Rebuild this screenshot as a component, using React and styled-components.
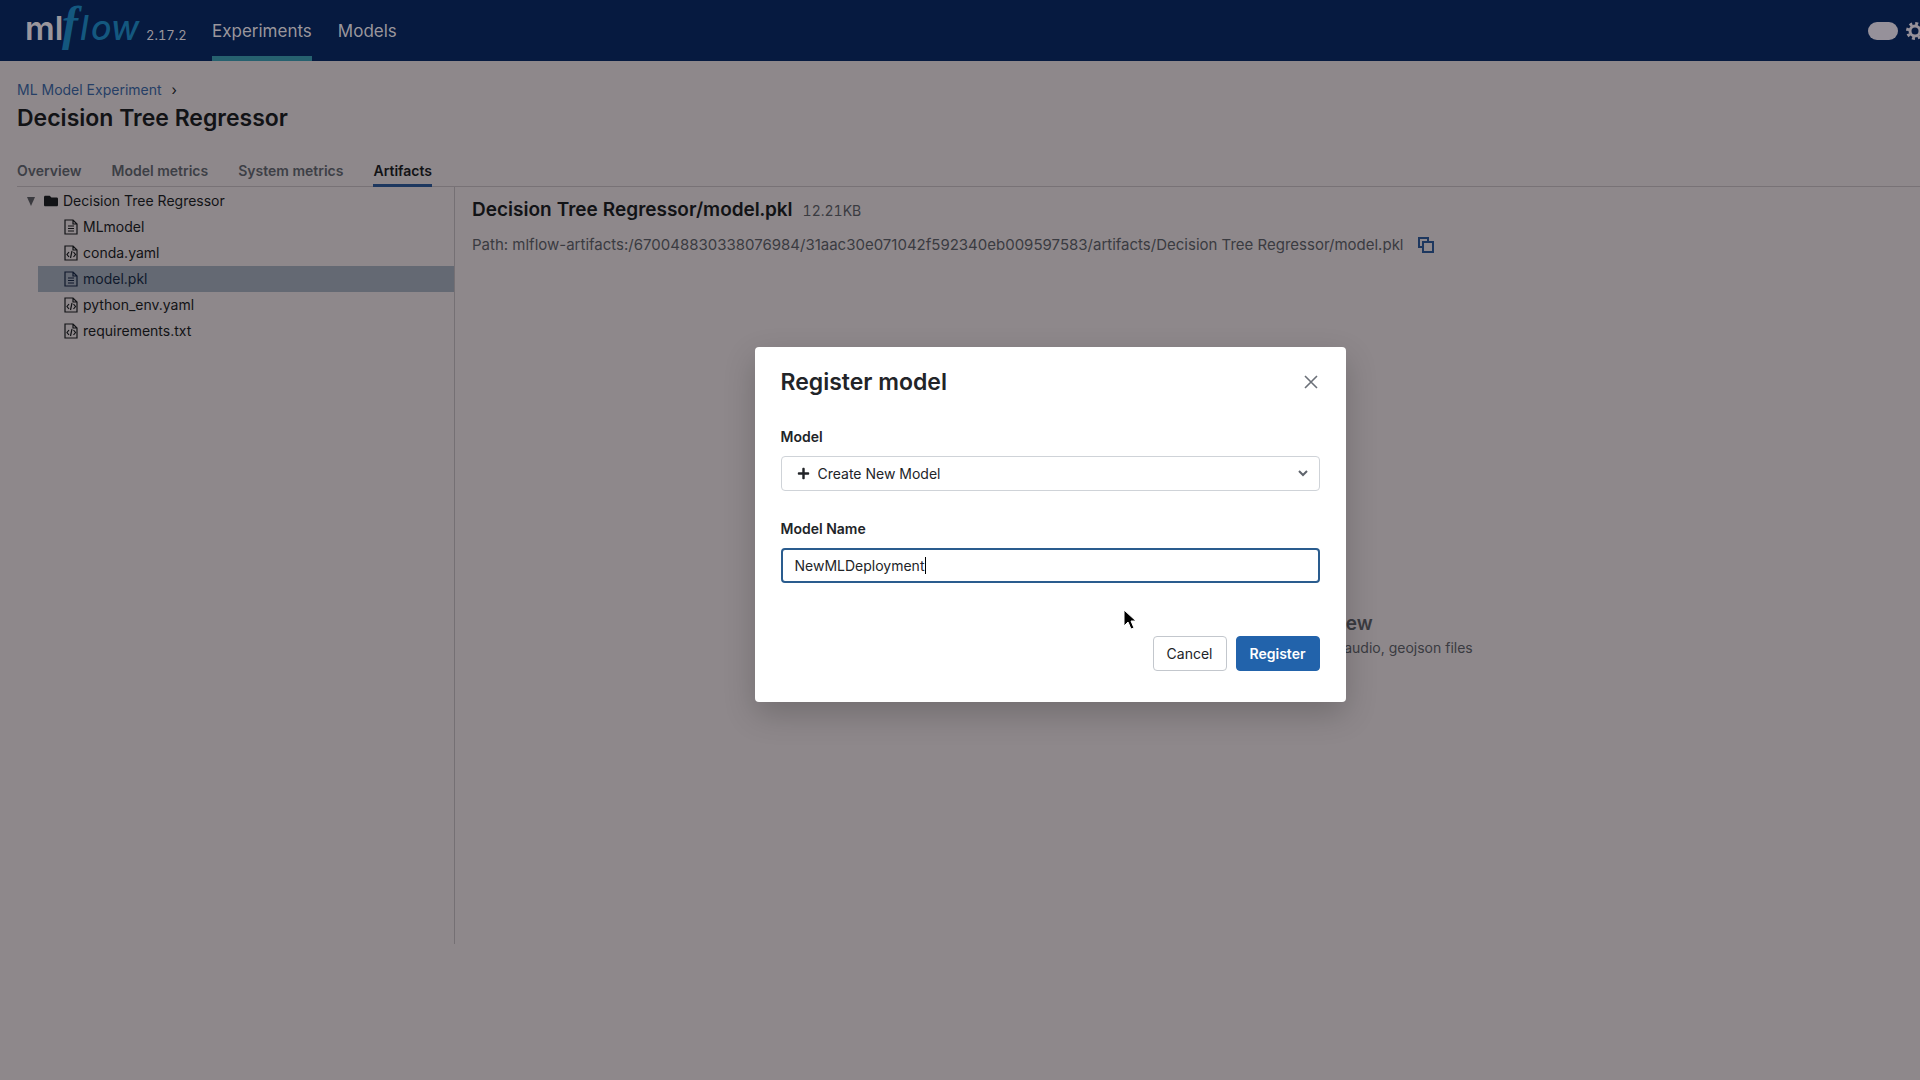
import React from 'react'
import styled, { createGlobalStyle } from 'styled-components'
import { FaFolder, FaPlus } from 'react-icons/fa'

const GlobalStyle = createGlobalStyle`
  *{
    box-sizing: border-box;
  }
  body{
    margin:0;
    overflow: hidden;
    background-color:#8e888b;
    color:#121316;
    font-family: Inter, "Liberation Sans", sans-serif;
    font-size:14px;
    line-height: 20px;
  }
  button, input, select{
    font-family: inherit;
    font-size: inherit;
    line-height: inherit;
    color: inherit;
  }
  h1, h2, h3, p, ul{
    margin:0;
    padding:0;
  }
`

/* the page runs past the right edge of the window */
const Page = styled.div`
  width:calc(100% + 180px);
  margin-right:-180px;
  min-height:100vh;
`

const TopBar = styled.header`
  display:flex;
  height:61px;
  padding-left:26px;
  background-color:#061a40;
  color:#9a969c;
`

const Logo = styled.a`
  width:118px;
  color:#9a969c;
  text-decoration: none;
  svg{
    display:block;
    overflow: visible;
  }
`

const Version = styled.span`
  width:68px;
  padding-top:25px;
  padding-left:2px;
  font-size:13px;
  font-variant-numeric: tabular-nums;
`

const Nav = styled.nav`
  display:flex;
  gap:26px;
  flex:1;
`

const NavLink = styled.a`
  display:flex;
  align-items: center;
  color:inherit;
  font-size:17px;
  text-decoration: none;
  border-bottom:5px solid ${p => p.$active ? '#26616f' : 'transparent'};
  border-top:5px solid transparent;
`

const Tools = styled.div`
  display:flex;
  align-items: center;
  gap:8px;
  padding-right:176px;
`

const Toggle = styled.button`
  width:30px;
  height:18px;
  padding:0;
  border:0;
  border-radius:9px;
  background-color:#96919a;
`

const IconButton = styled.button`
  display:flex;
  padding:0;
  border:0;
  background:none;
  color:${p => p.$color};
`

const Heading = styled.div`
  padding:18px 17px 0;
`

const Crumbs = styled.div`
  display:flex;
  gap:10px;
  height:22px;
  line-height: 22px;
  a{
    color:#263f66;
    text-decoration: none;
  }
`

const Title = styled.h1`
  font-size:23px;
  line-height: 34px;
  font-weight: 600;
`

const Tabs = styled.div`
  display:flex;
  gap:30px;
  margin:22px 0 0 17px;
  border-bottom:1px solid #787276;
`

const Tab = styled.button`
  height:30px;
  margin-bottom:-1px;
  padding:0;
  border:0;
  border-bottom:3px solid ${p => p.$active ? '#1d375f' : 'transparent'};
  background:none;
  color:${p => p.$active ? '#121316' : '#3d3f46'};
  font-weight: 600;
`

const Content = styled.div`
  display:flex;
`

const Sidebar = styled.aside`
  width:455px;
  min-height:757px;
  padding-top:1px;
  border-right:1px solid #757074;
`

const Tree = styled.ul`
  list-style: none;
`

const Row = styled.button`
  display:flex;
  align-items: center;
  width:100%;
  height:26px;
  padding:0 0 0 ${p => p.$folder ? '5px' : '26px'};
  gap:5px;
  border:0;
  background-color:${p => p.$selected ? '#646973' : 'transparent'};
  color:${p => p.$selected ? '#10192c' : '#121316'};
  text-align: left;
`

const TreeItem = styled.li`
  display:flex;
  align-items: center;
  padding-left:${p => p.$folder ? '27px' : '38px'};
  gap:4px;
`

const Arrow = styled.span`
  border-left:4px solid transparent;
  border-right:4px solid transparent;
  border-top:9px solid #3a3a3f;
`

const Main = styled.main`
  flex:1;
  padding:10px 34px 10px 17px;
`

const FileTitle = styled.div`
  display:flex;
  align-items: baseline;
  gap:10px;
  line-height: 26px;
  color:#3a3b41;
  font-variant-numeric: tabular-nums;
  h2{
    color:#121316;
    font-size:19px;
    font-weight: 600;
  }
`

const FilePath = styled.div`
  display:flex;
  align-items: center;
  gap:14px;
  margin-top:11px;
  color:#3a3b41;
  font-size:15px;
`

const Empty = styled.div`
  margin-top:355px;
  text-align: center;
  color:#3a3b41;
  h3{
    font-size:19px;
    line-height: 28px;
    font-weight: 600;
  }
`

const Overlay = styled.div`
  position:absolute;
  top:0;
  left:0;
  display:flex;
  align-items: center;
  justify-content: center;
  width:calc(100% + 180px);
  height:100vh;
  padding-bottom:31px;
`

const Dialog = styled.form`
  width:591px;
  padding:20px 26px 31px;
  border-radius:4px;
  background-color:#fff;
  box-shadow:0 12px 32px rgba(0, 0, 0, .2);
  color:#222428;
`

const DialogHead = styled.div`
  display:flex;
  align-items: center;
  justify-content: space-between;
  margin-bottom:30px;
  padding-right:2px;
  h2{
    font-size:23px;
    line-height: 30px;
    font-weight: 600;
  }
`

const Label = styled.label`
  display:block;
  margin-bottom:9px;
  font-weight: 600;
`

const SelectBox = styled.div`
  display:grid;
  align-items: center;
  margin-bottom:28px;
  svg, select{
    grid-row:1;
    grid-column:1;
  }
  svg{
    margin-left:16px;
    z-index: 1;
    pointer-events: none;
  }
  svg:last-child{
    justify-self: end;
    margin-right:12px;
  }
`

const Select = styled.select`
  width:100%;
  height:35px;
  padding:0 36px;
  border:1px solid #cfd3d8;
  border-radius:4px;
  background-color:#fff;
  appearance: none;
`

const InputBox = styled.div`
  position:relative;
`

const Input = styled.input`
  display:block;
  width:100%;
  height:35px;
  padding:0 12px;
  border:2px solid #2a5c8e;
  border-radius:4px;
  outline:none;
  caret-color: transparent;
`

const Caret = styled.span`
  position:absolute;
  left:144px;
  top:9px;
  width:1px;
  height:17px;
  background-color:#000;
`

const Actions = styled.div`
  display:flex;
  justify-content: flex-end;
  gap:9px;
  margin-top:53px;
`

const Button = styled.button`
  height:35px;
  padding:0 13px;
  border:1px solid ${p => p.$primary ? '#2263ab' : '#c3c7cd'};
  border-radius:4px;
  background-color:${p => p.$primary ? '#2263ab' : '#fff'};
  color:${p => p.$primary ? '#fff' : '#222428'};
  font-weight: ${p => p.$primary ? 600 : 400};
`

const Pointer = styled.svg`
  position:absolute;
  left:1122px;
  top:608px;
`

const TextFile = () => (
  <svg width="14" height="16" viewBox="0 0 14 16" fill="none" stroke="currentColor" strokeWidth="1.2">
    <path d="M1 1h8l4 4v10H1zM9 1v4h4" />
    <path d="M4 7h6M4 9.5h6M4 12h6" />
  </svg>
)

const CodeFile = () => (
  <svg width="14" height="16" viewBox="0 0 14 16" fill="none" stroke="currentColor" strokeWidth="1.2">
    <path d="M1 1h8l4 4v10H1zM9 1v4h4" />
    <path d="M5 7L3 9.5 5 12M9.5 7l2 2.5-2 2.5M8 6l-1.500 7" />
  </svg>
)

const files = [
  { name: 'MLmodel', icon: TextFile },
  { name: 'conda.yaml', icon: CodeFile },
  { name: 'model.pkl', icon: TextFile, selected: true },
  { name: 'python_env.yaml', icon: CodeFile },
  { name: 'requirements.txt', icon: CodeFile },
]

const tabs = ['Overview', 'Model metrics', 'System metrics', 'Artifacts']

const LogoMark = () => (
  <svg width="118" height="60" viewBox="0 0 118 60">
    <text x="-1" y="40" fontFamily="Inter" fontSize="33" fontWeight="600" fill="#9a969c">ml</text>
    <g fill="#14587f" fontStyle="italic">
      <text x="36" y="40" fontFamily="Liberation Serif" fontSize="48" fontWeight="700">f</text>
      <text x="54 65 85" y="40" fontFamily="Inter" fontSize="34" fontWeight="500">low</text>
    </g>
  </svg>
)

const Gear = () => (
  <svg width="18" height="18" viewBox="0 0 18 18" fill="none" stroke="currentColor">
    <circle cx="9" cy="9" r="5" strokeWidth="3" />
    <circle cx="9" cy="9" r="7.500" strokeWidth="3" strokeDasharray="2.945 2.945" />
  </svg>
)

const Copy = () => (
  <svg width="16" height="16" viewBox="0 0 16 16" fill="none" stroke="currentColor" strokeWidth="2">
    <path d="M5 10H1V1h9v4" />
    <path d="M5 5h10v10H5z" />
  </svg>
)

const Close = () => (
  <svg width="14" height="14" viewBox="0 0 14 14" fill="none" stroke="currentColor" strokeWidth="1.6">
    <path d="M1 1l12 12M13 1L1 13" />
  </svg>
)

const App = () => (
  <>
    <GlobalStyle />
    <Page>
      <TopBar>
        <Logo href="#" aria-label="mlflow"><LogoMark /></Logo>
        <Version>2.17.2</Version>
        <Nav>
          <NavLink href="#experiments" $active>Experiments</NavLink>
          <NavLink href="#models">Models</NavLink>
        </Nav>
        <Tools>
          <Toggle type="button" role="switch" aria-checked="false" aria-label="Theme" />
          <IconButton type="button" aria-label="Settings" $color="#96919a"><Gear /></IconButton>
        </Tools>
      </TopBar>
      <Heading>
        <Crumbs>
          <a href="#experiment">ML Model Experiment</a>
          <span>›</span>
        </Crumbs>
        <Title>Decision Tree Regressor</Title>
      </Heading>
      <Tabs role="tablist">
        {tabs.map(tab => (
          <Tab key={tab} type="button" role="tab" $active={tab === 'Artifacts'}>{tab}</Tab>
        ))}
      </Tabs>
      <Content>
        <Sidebar>
          <Tree>
            <TreeItem $folder>
              <Arrow />
              <Row type="button" $folder><FaFolder size={14} />Decision Tree Regressor</Row>
            </TreeItem>
            {files.map(({ name, icon: Icon, selected }) => (
              <TreeItem key={name}>
                <Row type="button" $selected={selected}><Icon />{name}</Row>
              </TreeItem>
            ))}
          </Tree>
        </Sidebar>
        <Main>
          <FileTitle>
            <h2>Decision Tree Regressor/model.pkl</h2>
            <span>12.21KB</span>
          </FileTitle>
          <FilePath>
            <span>Path: mlflow-artifacts:/670048830338076984/31aac30e071042f592340eb009597583/artifacts/Decision Tree Regressor/model.pkl</span>
            <IconButton type="button" aria-label="Copy path" $color="#1d375f"><Copy /></IconButton>
          </FilePath>
          <Empty>
            <h3>Select a file to preview</h3>
            <p>Supported formats: image, text, html, pdf, audio, geojson files</p>
          </Empty>
        </Main>
      </Content>
    </Page>
    <Overlay>
      <Dialog onSubmit={e => e.preventDefault()}>
        <DialogHead>
          <h2>Register model</h2>
          <IconButton type="button" aria-label="Close" $color="#6b7078"><Close /></IconButton>
        </DialogHead>
        <Label htmlFor="model">Model</Label>
        <SelectBox>
          <FaPlus size={13} />
          <Select id="model">
            <option>Create New Model</option>
          </Select>
          <svg width="10" height="7" viewBox="0 0 10 7" fill="none" stroke="#5f646c" strokeWidth="2">
            <path d="M1 1l4 4 4-4" />
          </svg>
        </SelectBox>
        <Label htmlFor="name">Model Name</Label>
        <InputBox>
          <Input id="name" type="text" defaultValue="NewMLDeployment" />
          <Caret />
        </InputBox>
        <Actions>
          <Button type="button">Cancel</Button>
          <Button type="submit" $primary>Register</Button>
        </Actions>
      </Dialog>
    </Overlay>
    <Pointer width="16" height="24" viewBox="0 0 16 24">
      <path d="M2 2v16l4-4 3 7 3-1-3-7h5z" fill="#000" stroke="#fff" strokeWidth="1" />
    </Pointer>
  </>
)

export default App
